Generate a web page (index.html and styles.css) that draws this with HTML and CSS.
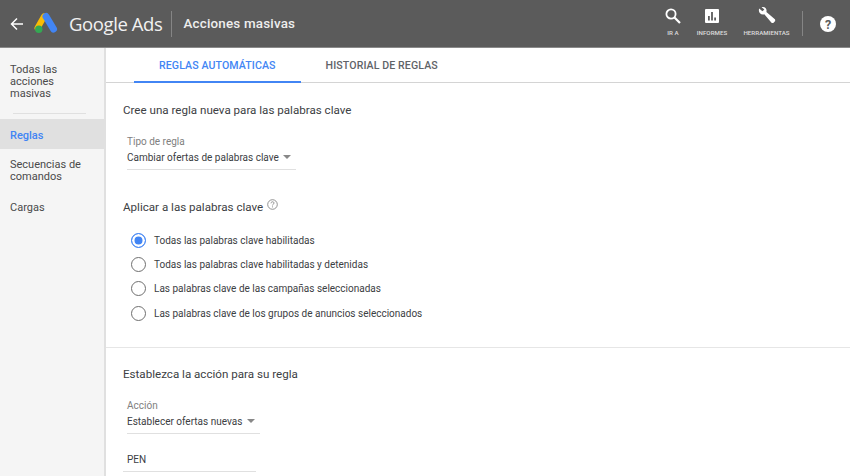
FILE: index.html
```html
<!DOCTYPE html>
<html lang="es">
<head>
    <meta charset="UTF-8">
    <meta name="viewport" content="width=device-width, initial-scale=1.0">
    <title>Acciones masivas</title>
    <link rel="stylesheet" href="styles.css">
</head>
<body>
    <header class="header">
        <svg class="back-icon" width="14" height="14" viewBox="0 0 14 14"><path d="M13 7H2M7 1.500 1.500 7 7 12.500" fill="none" stroke="#fff" stroke-width="1.500"/></svg>
        <svg class="ads-logo" width="24" height="22" viewBox="0 0 24 22">
            <path d="M10 4.500 3.500 16" stroke="#fbbc04" stroke-width="6" stroke-linecap="round"/>
            <path d="M12 4.500 19.500 17" stroke="#4285f4" stroke-width="7" stroke-linecap="round"/>
            <circle cx="4.800" cy="17.200" r="3.700" fill="#34a853"/>
        </svg>
        <span class="brand">Google Ads</span>
        <span class="header-sep"></span>
        <span class="page-title">Acciones masivas</span>
        <nav class="header-nav">
            <div class="nav-item nav-search">
                <svg width="18" height="18" viewBox="0 0 18 18"><circle cx="7" cy="7" r="4.600" fill="none" stroke="#fff" stroke-width="1.800"/><path d="M10.500 10.500 16 16" stroke="#fff" stroke-width="2.200"/></svg>
                <span>IR A</span>
            </div>
            <div class="nav-item nav-reports">
                <svg width="18" height="18" viewBox="0 0 18 18"><path fill-rule="evenodd" d="M3 2h12a1 1 0 0 1 1 1v12a1 1 0 0 1-1 1H3a1 1 0 0 1-1-1V3a1 1 0 0 1 1-1zM5 9v4.500h1.800V9zM8.100 5v8.500h1.800V5zM11.200 10.500v3H13v-3z" fill="#fff"/></svg>
                <span>INFORMES</span>
            </div>
            <div class="nav-item nav-tools">
                <svg width="20" height="18" viewBox="0 0 20 18"><path d="M2.200 1.400 5.400 4.200 7.400 2.400 4.600.2C7-.6 9.600 1 9.600 3.600c0 .5-.1 1-.2 1.300l8.200 7.200c.8.700.8 1.800.1 2.500l-.9.900c-.7.700-1.800.7-2.500-.1L7.300 7.200c-.4.100-.8.200-1.300.2C3 7.400 1 4.400 2.200 1.400z" fill="#fff"/></svg>
                <span>HERRAMIENTAS</span>
            </div>
            <span class="nav-sep"></span>
            <svg class="help-icon" width="16" height="16" viewBox="0 0 16 16"><circle cx="8" cy="8" r="8" fill="#fff"/><text x="8" y="12.500" text-anchor="middle" class="help-mark">?</text></svg>
        </nav>
    </header>

    <div class="layout">
        <aside class="sidebar">
            <a class="side-link side-first">Todas las acciones masivas</a>
            <hr class="side-rule">
            <a class="side-link side-active">Reglas</a>
            <a class="side-link">Secuencias de comandos</a>
            <a class="side-link">Cargas</a>
        </aside>

        <main class="main">
            <div class="tabs">
                <a class="tab tab-active">REGLAS AUTOMÁTICAS</a>
                <a class="tab">HISTORIAL DE REGLAS</a>
            </div>

            <section class="section section-first">
                <h2>Cree una regla nueva para las palabras clave</h2>
                <div class="select select-type">
                    <label>Tipo de regla</label>
                    <div class="select-value">Cambiar ofertas de palabras clave <i class="caret"></i></div>
                </div>
                <h2 class="apply-title">Aplicar a las palabras clave
                    <svg class="info-icon" width="11" height="11" viewBox="0 0 11 11"><circle cx="5.500" cy="5.500" r="4.800" fill="none" stroke="#777" stroke-width=".8"/><path d="M4 4.300c0-2 3-2 3-.2 0 1.100-1.500 1.100-1.500 2.300M5.500 7.400v1" fill="none" stroke="#777" stroke-width=".8"/></svg>
                </h2>
                <div class="radios">
                    <div class="radio-row"><span class="radio radio-on"></span>Todas las palabras clave habilitadas</div>
                    <div class="radio-row"><span class="radio"></span>Todas las palabras clave habilitadas y detenidas</div>
                    <div class="radio-row"><span class="radio"></span>Las palabras clave de las campañas seleccionadas</div>
                    <div class="radio-row"><span class="radio"></span>Las palabras clave de los grupos de anuncios seleccionados</div>
                </div>
            </section>

            <section class="section section-action">
                <h2>Establezca la acción para su regla</h2>
                <div class="select select-action">
                    <label>Acción</label>
                    <div class="select-value">Establecer ofertas nuevas <i class="caret"></i></div>
                </div>
                <div class="currency">PEN</div>
            </section>
        </main>
    </div>
</body>
</html>
```

FILE: styles.css
```css
* {
    box-sizing: border-box;
}
html, body {
    height: 476px;
    overflow: hidden;
}
body {
    margin: 0;
    font-family: Roboto, "Liberation Sans", Arial, sans-serif;
    background-color: #fff;
    color: #3c4043;
}
.header {
    height: 48px;
    display: flex;
    align-items: center;
    padding-left: 10px;
    background-color: #5b5b5b;
    border-bottom: 1px solid #8a8a8a;
    color: #fff;
}
.back-icon {
    margin-right: 10px;
}
.ads-logo {
    margin-right: 11px;
    margin-bottom: 2px;
}
.brand {
    font-size: 18.500px;
    color: #f1f1f1;
    font-family: "Open Sans", Roboto, sans-serif;
    letter-spacing: -0.4px;
}
.header-sep {
    width: 1px;
    height: 26px;
    margin: 0 11px 0 9px;
    background-color: #858585;
}
.page-title {
    font-size: 13.400px;
    font-weight: 500;
    letter-spacing: 0.2px;
    color: #eee;
}
.header-nav {
    margin-left: auto;
    display: flex;
    align-items: center;
}
.nav-item {
    display: flex;
    flex-direction: column;
    align-items: center;
    gap: 5px;
    margin-bottom: 3px;
}
.nav-item span {
    font-size: 6.200px;
    line-height: 7px;
    font-weight: 500;
    color: #ddd;
}
.nav-search {
    margin-right: 15px;
}
.nav-reports {
    width: 30px;
    margin-right: 16px;
}
.nav-tools {
    width: 47px;
}
.nav-sep {
    width: 1px;
    height: 25px;
    margin: 0 17px 0 12px;
    background-color: #858585;
}
.help-icon {
    margin-right: 14px;
}
.help-mark {
    font-size: 12.500px;
    font-weight: 700;
    fill: #5b5b5b;
}
.layout {
    display: flex;
    height: 428px;
}
.sidebar {
    width: 106px;
    flex-shrink: 0;
    padding-top: 16px;
    background-color: #f5f5f5;
    border-right: 2px solid #e0e0e0;
}
.side-link {
    display: block;
    padding: 0 10px;
    margin-bottom: 19px;
    font-size: 11px;
    line-height: 12px;
    color: #4a4a4a;
}
.side-first {
    margin-bottom: 0;
    padding-right: 30px;
}
.side-rule {
    margin: 13px 18px 5px 13px;
    border: 0;
    border-top: 1px solid #e0e0e0;
}
.side-active {
    height: 30px;
    padding-top: 3px;
    line-height: 28px;
    margin-bottom: 10px;
    background-color: #e0e0e0;
    color: #4285f4;
    font-weight: 500;
}
.main {
    flex: 1;
    min-width: 0;
}
.tabs {
    height: 35px;
    display: flex;
    padding-left: 28px;
    border-bottom: 1px solid #d4d4d4;
}
.tab {
    height: 35px;
    padding: 11px 25px 0;
    font-size: 10.600px;
    font-weight: 500;
    letter-spacing: 0.1px;
    color: #5f6368;
}
.tab-active {
    color: #4285f4;
    border-bottom: 2px solid #4285f4;
}
.section {
    padding-left: 17px;
}
.section-first {
    height: 265px;
    padding-top: 20px;
    border-bottom: 1px solid #e6e6e6;
}
.section-action {
    padding-top: 19px;
}
.section h2 {
    margin: 0;
    font-size: 11.600px;
    line-height: 14px;
    font-weight: 400;
    color: #3c4043;
}
.select {
    margin-top: 19px;
    margin-left: 4px;
    padding-bottom: 5px;
    border-bottom: 1px solid #e0e0e0;
}
.select label {
    display: block;
    font-size: 10px;
    line-height: 12px;
    color: #808080;
}
.select-value {
    margin-top: 4px;
    font-size: 10px;
    line-height: 12px;
    white-space: nowrap;
}
.select-type {
    width: 169px;
}
.select-action {
    width: 133px;
}
.caret {
    display: inline-block;
    margin-left: 2px;
    vertical-align: 2px;
    border-left: 4px solid transparent;
    border-right: 4px solid transparent;
    border-top: 4px solid #888;
}
.section h2.apply-title {
    margin-top: 29px;
}
.info-icon {
    margin-left: 1px;
    vertical-align: 1px;
}
.radios {
    margin-top: 14px;
    padding-left: 8px;
}
.radio-row {
    height: 24.300px;
    display: flex;
    align-items: center;
    font-size: 10px;
}
.radio {
    width: 15px;
    height: 15px;
    margin-right: 8px;
    border: 1.500px solid #6f6f6f;
    border-radius: 50%;
    background-color: #fff;
}
.radio-on {
    border-color: #4285f4;
    background-color: #4285f4;
    box-shadow: inset 0 0 0 2.500px #fff;
}
.currency {
    width: 133px;
    margin-top: 19px;
    padding: 0 4px 5px;
    font-size: 10px;
    line-height: 13px;
    border-bottom: 1px solid #e0e0e0;
}
```
